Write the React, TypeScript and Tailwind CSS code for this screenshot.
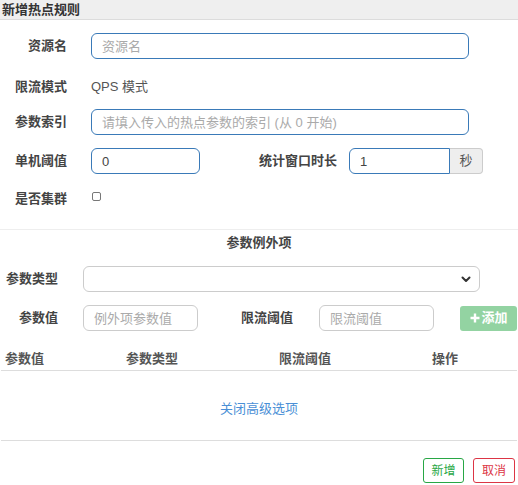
const font = { fontFamily: '"Liberation Sans", "Noto Sans CJK SC", sans-serif' };

const Label = ({ children, className = "" }: { children: React.ReactNode; className?: string }) => (
  <span className={`text-[13px] font-bold text-[#444] text-right shrink-0 ${className}`}>{children}</span>
);

export default function App() {
  return (
    <div className="w-[518px] h-[485px] bg-white text-[13px] text-[#333] overflow-hidden" style={font}>
      {/* title */}
      <div className="h-[20px] bg-[#efefef] border-b border-[#dcdcdc] flex items-center px-[2px]">
        <span className="font-bold text-[13px] text-[#333]">新增热点规则</span>
      </div>

      {/* main form */}
      <div className="flex flex-col">
        <div className="flex items-center h-[26px] mt-[13px]">
          <Label className="w-[67px]">资源名</Label>
          <input
            placeholder="资源名"
            className="ml-[24px] w-[378px] h-[26px] border border-[#3a7ab8] rounded-[6px] px-[10px] text-[13px] placeholder:text-[#aaa] outline-none"
          />
        </div>

        <div className="flex items-center h-[26px] mt-[15px]">
          <Label className="w-[67px]">限流模式</Label>
          <span className="ml-[24px] text-[13px] text-[#555]">QPS 模式</span>
        </div>

        <div className="flex items-center h-[26px] mt-[9px]">
          <Label className="w-[67px]">参数索引</Label>
          <input
            placeholder="请填入传入的热点参数的索引 (从 0 开始)"
            className="ml-[24px] w-[378px] h-[26px] border border-[#3a7ab8] rounded-[6px] px-[10px] text-[13px] placeholder:text-[#aaa] outline-none"
          />
        </div>

        <div className="flex items-center h-[26px] mt-[13px]">
          <Label className="w-[67px]">单机阈值</Label>
          <input
            defaultValue="0"
            className="ml-[24px] w-[109px] h-[26px] border border-[#3a7ab8] rounded-[6px] px-[10px] text-[13px] text-[#444] outline-none"
          />
          <Label className="ml-[59px]">统计窗口时长</Label>
          <div className="ml-[12px] flex h-[26px]">
            <input
              defaultValue="1"
              className="w-[101px] h-[26px] border border-[#3a7ab8] rounded-l-[6px] px-[10px] text-[13px] text-[#444] outline-none"
            />
            <span className="w-[33px] h-[26px] bg-[#eee] border border-l-0 border-[#ccc] rounded-r-[4px] flex items-center justify-center text-[#555]">
              秒
            </span>
          </div>
        </div>

        <div className="flex h-[26px] mt-[12px]">
          <Label className="w-[67px] self-center">是否集群</Label>
          <span className="ml-[25px] mt-[6px] w-[9px] h-[9px] border border-[#777] rounded-[2px] bg-white" />
        </div>
      </div>

      <div className="mt-[17px] border-t border-[#eee]" />

      {/* exceptions */}
      <div className="text-center font-bold text-[13px] text-[#444] mt-[4px] h-[18px] leading-[18px]">参数例外项</div>

      <div className="flex items-center h-[26px] mt-[14px]">
        <Label className="w-[58px]">参数类型</Label>
        <div className="ml-[25px] w-[397px] h-[26px] border border-[#ccc] rounded-[6px] flex items-center justify-end pr-[8px]">
          <svg width="10" height="7" viewBox="0 0 10 7">
            <path d="M1.5 1.5 L5 5 L8.5 1.5" fill="none" stroke="#333" strokeWidth="2" strokeLinecap="round" strokeLinejoin="round" />
          </svg>
        </div>
      </div>

      <div className="flex items-center h-[26px] mt-[13px]">
        <Label className="w-[58px]">参数值</Label>
        <input
          placeholder="例外项参数值"
          className="ml-[25px] w-[115px] h-[26px] border border-[#ccc] rounded-[6px] px-[10px] text-[13px] placeholder:text-[#aaa] outline-none"
        />
        <Label className="ml-[43px]">限流阈值</Label>
        <input
          placeholder="限流阈值"
          className="ml-[26px] w-[115px] h-[26px] border border-[#ccc] rounded-[6px] px-[10px] text-[13px] placeholder:text-[#aaa] outline-none"
        />
        <button className="ml-[26px] w-[57px] h-[25px] bg-[#93d3a2] rounded-[3px] text-white font-bold text-[13px] flex items-center justify-center gap-[2px]">
          <svg width="10" height="10" viewBox="0 0 10 10">
            <path d="M3.8 0.5h2.4v3.3h3.3v2.4H6.2v3.3H3.8V6.2H0.5V3.8h3.3z" fill="white" />
          </svg>
          添加
        </button>
      </div>

      {/* table */}
      <div className="mt-[16px] mx-[1px] border-b border-[#ddd]">
        <div className="grid grid-cols-[121px_153px_153px_1fr] pl-[4px] h-[23px] items-center font-bold text-[13px] text-[#555]">
          <span>参数值</span>
          <span>参数类型</span>
          <span>限流阈值</span>
          <span>操作</span>
        </div>
      </div>

      <div className="h-[70px] mx-[1px] border-b border-[#ddd] flex items-center justify-center pt-[7px]">
        <span className="text-[#4a8fd6] text-[13px]">关闭高级选项</span>
      </div>

      <div className="flex justify-end gap-[9px] mt-[17px] pr-[3px]">
        <button className="w-[41px] h-[25px] border border-[#28a745] rounded-[3px] text-[#28a745] text-[12px] bg-white">新增</button>
        <button className="w-[42px] h-[25px] border border-[#dc3545] rounded-[3px] text-[#dc3545] text-[12px] bg-white">取消</button>
      </div>
    </div>
  );
}
